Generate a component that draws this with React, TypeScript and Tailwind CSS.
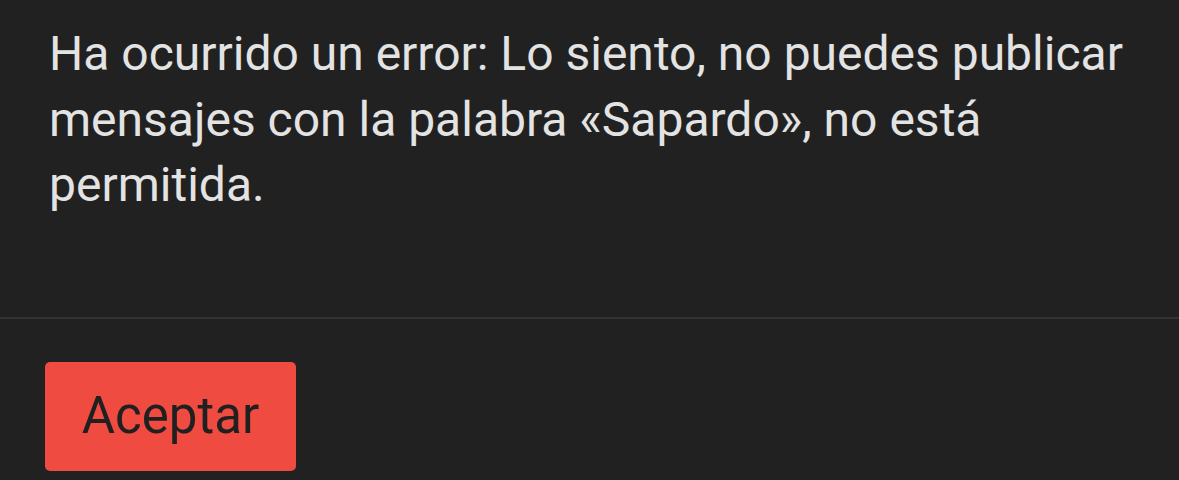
export default function App() {
  return (
    <div className="w-[1179px] h-[480px] bg-[#212121] overflow-hidden" style={{ fontFamily: 'Roboto, "Noto Sans", sans-serif' }}>
      <div className="pl-[49px] pr-[20px] pt-[21px] h-[317px]">
        <p className="text-[48px] leading-[65.5px] text-[#e3e3e3]">
          Ha ocurrido un error: Lo siento, no puedes publicar mensajes con la palabra «Sapardo», no está permitida.
        </p>
      </div>
      <div className="h-[2px] bg-[#333333]" />
      <div className="pl-[45px] pt-[43px]">
        <button className="w-[251px] h-[109px] rounded-[5px] bg-[#ef4b41] text-[#202020] text-[51px] flex items-center justify-center">
          Aceptar
        </button>
      </div>
    </div>
  );
}
